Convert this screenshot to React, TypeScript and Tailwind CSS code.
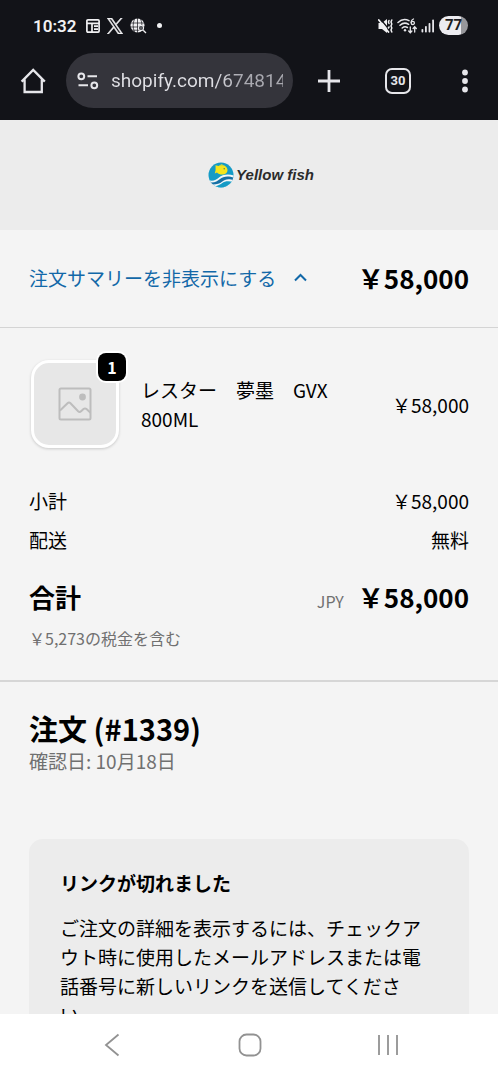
import type { ReactNode } from "react";

function MuteIcon() {
  return (
    <svg width="15" height="16" viewBox="0 0 15 16" fill="none" stroke="#f1f1f3" strokeLinecap="round" aria-hidden="true">
      <path d="M0.500 5h3.500L9 1v14L4 11H0.500z" fill="#f1f1f3" stroke="none" />
      <path d="M2.500 1 11 11.500" stroke="#121318" strokeWidth="1.200" />
      <path d="M0.800 2 10.500 14" strokeWidth="1.800" />
      <path d="M11 2.500l-.6 1.500.6 1.500M11 9l-.6 1M13.800 2l-.8 2 .8 2-.8 2 .8 2-.8 2 .8 2" strokeWidth="1.500" />
    </svg>
  );
}

function WifiIcon() {
  return (
    <svg width="20" height="16" viewBox="0 0 20 16" fill="none" stroke="#e6e6ea" strokeWidth="1.500" strokeLinecap="round" aria-hidden="true">
      <path d="M1 4.500C4 1.600 8.500 1 12 2.600M3 7.300c2.400-2.200 6-2.600 8.600-1M5.200 10c1.500-1.300 3.600-1.500 5.200-.5" />
      <circle cx="8" cy="12.300" r="1.200" fill="#e6e6ea" stroke="none" />
      <path d="M16.500 1c-1.600.6-2.300 2-2.300 3.600" strokeWidth="1.300" />
      <circle cx="15.800" cy="4.900" r="1.600" strokeWidth="1.300" />
      <path d="M13.300 9v5.500M11.700 13l1.600 1.700L14.900 13M17.700 14V9M16.100 10.500l1.600-1.700 1.600 1.700" strokeWidth="1.300" />
    </svg>
  );
}

function SignalIcon() {
  return (
    <svg width="14" height="14" viewBox="0 0 14 14" fill="#e6e6ea" aria-hidden="true">
      <rect x="0.500" y="10" width="1.800" height="3.500" rx="0.800" />
      <rect x="4" y="7" width="1.800" height="6.500" rx="0.800" />
      <rect x="7.600" y="4" width="1.800" height="9.500" rx="0.800" />
      <rect x="11.200" y="0.500" width="1.800" height="13" rx="0.800" />
    </svg>
  );
}

function StatusBar() {
  return (
    <div className="flex h-[52px] items-center justify-between pb-px pl-[33px] pr-[30px] text-[#f1f1f3]">
      <div className="flex items-center gap-[10px]">
        <span className="font-['Roboto',sans-serif] text-[17px] font-semibold leading-6">10:32</span>
        <div className="flex items-center gap-[7px]">
          <svg width="14" height="14" viewBox="0 0 14 14" fill="none" stroke="#f1f1f3" strokeWidth="1.700" aria-hidden="true">
            <rect x="0.900" y="0.900" width="12.200" height="12.200" rx="1" />
            <path d="M1 4.300h12M6 4.500V13M8 7.200h4M8 10.200h4" />
          </svg>
          <svg width="16" height="16" viewBox="0 0 24 24" fill="#f1f1f3" stroke="#f1f1f3" strokeWidth="0.900" aria-hidden="true">
            <path
              fillRule="evenodd"
              d="M14.200 10.200 22.900 0h-2.100l-7.500 8.800L7.300 0H.3l9.100 13.300L.3 24h2.100l8-9.300 6.300 9.300h7zM3.100 1.600h3.200l14.600 20.900h-3.200z"
            />
          </svg>
          <svg width="17" height="16" viewBox="0 0 17 16" fill="none" aria-hidden="true">
            <circle cx="7.500" cy="7.500" r="7" fill="#f1f1f3" />
            <path d="M0 5h15M0 9h15M2 12.200h10M7.500 0v15M4.500 1c-1.800 4-1.800 9 0 13M10.500 1c1.500 3 1.700 6 1 10" stroke="#121318" strokeWidth="0.700" />
            <circle cx="11" cy="10" r="2.700" fill="#5a5b60" stroke="#f1f1f3" strokeWidth="1" />
            <path d="M13.200 12.200 16 15" stroke="#f1f1f3" strokeWidth="1.300" />
          </svg>
        </div>
        <span className="size-[5px] rounded-full bg-[#f1f1f3]" />
      </div>
      <div className="flex items-center gap-1">
        <MuteIcon />
        <WifiIcon />
        <SignalIcon />
        <span className="flex h-[19px] w-[29px] items-center justify-center rounded-full bg-linear-to-r from-[#ececf0] from-77% to-[#97979b] to-77% font-['Roboto',sans-serif] text-[15px] font-bold leading-none text-[#1b1c21]">
          77
        </span>
      </div>
    </div>
  );
}

function BrowserBar() {
  return (
    <div className="flex h-[68px] items-center pb-[11px] pl-5 pr-[23px] text-[#e6e6ea]">
      <button type="button" aria-label="ホーム" className="flex w-[26px] justify-center">
        <svg width="26" height="26" viewBox="0 0 26 26" fill="none" stroke="currentColor" strokeWidth="2.300" strokeLinejoin="miter">
          <path d="M4.600 11.500V24h17.200V11.500M1.600 13.600 13.200 2 24.800 13.600" />
        </svg>
      </button>
      <label className="ml-5 flex h-[55px] min-w-0 flex-1 items-center gap-3 rounded-full bg-[#34343b] pl-[11px] pr-[10px]">
        <svg className="shrink-0" width="22" height="18" viewBox="0 0 22 18" fill="none" stroke="currentColor" strokeWidth="2" aria-hidden="true">
          <circle cx="4.300" cy="4.300" r="2.900" />
          <path d="M10.500 4.300H20M1.500 13.300H11" />
          <circle cx="17.300" cy="13.300" r="2.900" />
        </svg>
        <input
          type="text"
          aria-label="アドレス"
          readOnly
          value="shopify.com/67481444"
          className="w-full min-w-0 bg-linear-to-r from-[#e0e0e5] from-60% to-[#a9a9b0] to-75% bg-clip-text font-['Roboto',sans-serif] text-[19px] leading-7 text-transparent outline-none"
        />
      </label>
      <button type="button" aria-label="新しいタブ" className="ml-6 flex w-6 justify-center">
        <svg width="24" height="24" viewBox="0 0 24 24" fill="none" stroke="currentColor" strokeWidth="2.800">
          <path d="M12 1v22M1 12h22" />
        </svg>
      </button>
      <button
        type="button"
        aria-label="タブ 30"
        className="ml-11 flex size-[26px] items-center justify-center rounded-[7px] border-[2px] border-current font-['Roboto',sans-serif] text-[13px] font-bold leading-none"
      >
        30
      </button>
      <button type="button" aria-label="メニュー" className="ml-11 flex w-5 justify-center">
        <svg width="8" height="24" viewBox="0 0 8 24" fill="currentColor">
          <circle cx="4" cy="3.500" r="2.900" />
          <circle cx="4" cy="12" r="2.900" />
          <circle cx="4" cy="20.500" r="2.900" />
        </svg>
      </button>
    </div>
  );
}

function FishLogo() {
  return (
    <svg width="26" height="26" viewBox="0 0 26 26" aria-hidden="true">
      <defs>
        <clipPath id="disc">
          <circle cx="13" cy="13" r="12.500" />
        </clipPath>
      </defs>
      <g clipPath="url(#disc)">
        <rect width="26" height="26" fill="#159bc6" />
        <path d="M0 18c5 1.600 8 0 11-2.500s8-4 15-2V26H0z" fill="#f4f7f8" />
        <path d="M0 20c6 1.200 9-.5 12-3s8-3.500 14-1.200v2.400c-6-2-9-1-12 1.600S6 23.200 0 22z" fill="#1670a5" />
        <path d="M3 24.500c5 .4 8-1 11-3.200s7-2.600 12-.8V26H3z" fill="#159bc6" />
      </g>
      <path d="M7.500 3.200 10.500 4c3-1.900 6.800-1 8.500 2 1.200 2.500.3 5-2 6-3 1.200-6 .6-8-1.500L6.800 11.500l.8-3.500z" fill="#f5e51b" />
      <path d="M11 3.500l3-1.500 2 2.200z" fill="#c7d741" />
      <circle cx="16.200" cy="6.800" r="0.700" fill="#487d54" />
    </svg>
  );
}

function Row({ label, children }: { label: string; children: ReactNode }) {
  return (
    <div className="flex justify-between">
      <dt>{label}</dt>
      <dd>{children}</dd>
    </div>
  );
}

export default function App() {
  return (
    <div className="flex h-screen flex-col overflow-hidden bg-[#f4f4f4] font-['Noto_Sans_CJK_JP',sans-serif] text-[19px] leading-[29px] text-black">
      <header className="shrink-0 bg-[#121318]">
        <StatusBar />
        <BrowserBar />
      </header>

      <main lang="ja" className="min-h-0 flex-1 overflow-hidden">
        <div className="flex h-[110px] items-center justify-center bg-[#ececec] pb-px pl-6">
          <a href="#" className="flex items-center gap-[2px]">
            <FishLogo />
            <span className="font-['Liberation_Sans',sans-serif] text-[15px] font-bold italic leading-5 text-[#2b2b2b]">Yellow fish</span>
          </a>
        </div>

        <div className="flex h-[98px] items-center justify-between border-b border-[#d4d4d4] px-[29px] pb-[2px]">
          <button type="button" aria-expanded="true" className="flex items-center gap-[18px] text-[#1268a8]">
            注文サマリーを非表示にする
            <svg width="13" height="9" viewBox="0 0 13 9" fill="none" stroke="currentColor" strokeWidth="2" aria-hidden="true">
              <path d="M1 7.500 6.500 2 12 7.500" />
            </svg>
          </button>
          <strong className="text-[26px] font-bold leading-10">￥58,000</strong>
        </div>

        <section className="border-b-2 border-[#d6d6d6] px-[29px] pb-[30px] pt-8">
          <div className="flex items-center pb-[2px] pl-[2px]">
            <div className="relative flex size-[88px] shrink-0 items-center justify-center rounded-[18px] border-[3px] border-white bg-[#e7e7e7] shadow-[0_1px_3px_rgba(0,0,0,0.18)]">
              <svg width="34" height="34" viewBox="0 0 34 34" fill="none" stroke="#bdbdbd" strokeWidth="2" aria-hidden="true">
                <rect x="1.500" y="1.500" width="31" height="31" rx="1.500" />
                <circle cx="24.500" cy="10" r="3.400" fill="#bdbdbd" stroke="none" />
                <path d="M2 23.500l7.500-7.200c1-1 2-1 3 0l7.600 8c1 1 2 1 3 0l2.400-2.200c1-.9 2-.9 3 0l4 3.700" />
              </svg>
              <span className="absolute -right-[10px] -top-[10px] flex size-7 items-center justify-center rounded-lg bg-black text-base font-bold leading-none text-white ring-2 ring-white">
                1
              </span>
            </div>
            <p className="ml-[22px] min-w-0 flex-1 pr-12">レスター　夢墨　GVX 800ML</p>
            <span>￥58,000</span>
          </div>

          <dl className="mt-9 flex flex-col gap-[10px]">
            <Row label="小計">￥58,000</Row>
            <Row label="配送">無料</Row>
          </dl>

          <div className="mt-[23px] flex items-baseline justify-between leading-10">
            <strong className="text-[26px] font-bold">合計</strong>
            <span className="flex items-baseline gap-[14px]">
              <span className="text-base text-[#707070]">JPY</span>
              <strong className="text-[26px] font-bold">￥58,000</strong>
            </span>
          </div>
          <p className="mt-[9px] text-base leading-6 text-[#707070]">￥5,273の税金を含む</p>
        </section>

        <section className="px-[29px] pt-7">
          <h1 className="text-[29px] font-bold leading-9">注文 (#1339)</h1>
          <p className="text-[#707070]">確認日: 10月18日</p>

          <div className="mt-16 rounded-[14px] bg-[#ececec] px-[31px] py-[29px]">
            <h2 className="font-bold">リンクが切れました</h2>
            <p className="mt-4">
              ご注文の詳細を表示するには、チェックアウト時に使用したメールアドレスまたは電話番号に新しいリンクを送信してください。
            </p>
          </div>
        </section>
      </main>

      <nav className="grid h-[66px] shrink-0 grid-cols-[1fr_56px_1fr] items-center bg-white pb-1 pl-[2px] text-[#929292]">
        <button type="button" aria-label="戻る" className="flex justify-center">
          <svg width="16" height="24" viewBox="0 0 16 24" fill="none" stroke="currentColor" strokeWidth="1.800">
            <path d="M14.500 1.500 2 12l12.500 10.500" />
          </svg>
        </button>
        <button type="button" aria-label="ホーム画面" className="flex justify-center">
          <svg width="24" height="24" viewBox="0 0 24 24" fill="none" stroke="currentColor" strokeWidth="1.800">
            <rect x="1.500" y="1.500" width="21" height="21" rx="7" />
          </svg>
        </button>
        <button type="button" aria-label="履歴" className="flex justify-center">
          <svg width="22" height="22" viewBox="0 0 22 22" fill="none" stroke="currentColor" strokeWidth="1.800">
            <path d="M2 1v20M11 1v20M20 1v20" />
          </svg>
        </button>
      </nav>
    </div>
  );
}
